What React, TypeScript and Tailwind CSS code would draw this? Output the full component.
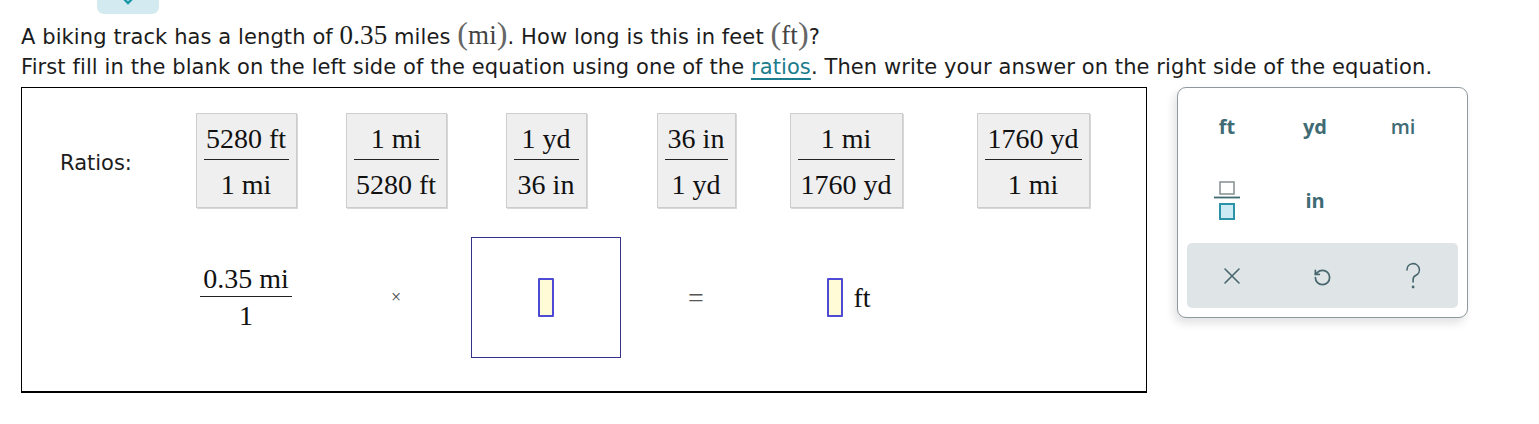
import React from 'react';

const sans = { fontFamily: '"DejaVu Sans", Verdana, sans-serif' };

type Ratio = { num: string; den: string; w: string };

const ratios: Ratio[] = [
  { num: '5280 ft', den: '1 mi', w: 'w-[101px]' },
  { num: '1 mi', den: '5280 ft', w: 'w-[101px]' },
  { num: '1 yd', den: '36 in', w: 'w-[81px]' },
  { num: '36 in', den: '1 yd', w: 'w-[79px]' },
  { num: '1 mi', den: '1760 yd', w: 'w-[113px]' },
  { num: '1760 yd', den: '1 mi', w: 'w-[113px]' },
];

const cols = 'grid grid-cols-[150px_150px_150px_150px_150px_224px]';

const RatioTile = ({ r }: { r: Ratio }) => (
  <div
    className={`${r.w} h-[95px] bg-[#efefef] border border-[#cdcdcd] shadow-[1px_1px_0_#d8d8d8] flex flex-col items-stretch pt-[10px] px-[7px] font-['Liberation_Serif',serif] text-[28px] text-[#111]`}
  >
    <div className="h-[30px] leading-[30px] text-center whitespace-nowrap">{r.num}</div>
    <div className="h-px bg-[#222] mt-[5px]" />
    <div className="h-[30px] leading-[30px] text-center whitespace-nowrap mt-[10px]">{r.den}</div>
  </div>
);

const Blank = () => (
  <div className="w-[16px] h-[39px] border-2 border-[#4f4ad4] bg-[#fffbd6] rounded-[1px]" />
);

const KeyText = ({ children }: { children: React.ReactNode }) => (
  <div className="flex items-center justify-center h-[74px] text-[20px] font-bold text-[#3f6b74]" style={{ fontFamily: '"Open Sans", sans-serif' }}>
    {children}
  </div>
);

export default function App() {
  return (
    <div className="w-[1539px] h-[424px] bg-white text-[#1c1c1c]" style={sans}>
      <div className="ml-[97px] w-[62px] h-[14px] bg-[#d3ebf0] rounded-b-[7px] flex justify-center">
        <svg width="12" height="8" viewBox="0 0 12 8" className="-mt-[2px]">
          <path d="M2 1 L6 5 L10 1" fill="none" stroke="#1a98a8" strokeWidth="2.4" strokeLinecap="round" />
        </svg>
      </div>

      <div className="pl-[21px] pt-[8px] text-[21px] tracking-[0.1px]">
        <p className="h-[30px] leading-[30px] whitespace-nowrap">
          A biking track has a length of{' '}
          <span className="font-['Liberation_Serif',serif] text-[27px] leading-[0px]">0.35</span> miles{' '}
          <span className="font-['Liberation_Serif',serif] text-[27px] leading-[0px] text-[#444]">
            <span className="text-[32px] text-[#666]">(</span>mi<span className="text-[32px] text-[#666]">)</span>
          </span>
          . How long is this in feet{' '}
          <span className="font-['Liberation_Serif',serif] text-[27px] leading-[0px] text-[#444]">
            <span className="text-[32px] text-[#666]">(</span>ft<span className="text-[32px] text-[#666]">)</span>
          </span>
          ?
        </p>
        <p className="h-[30px] leading-[30px] whitespace-nowrap">
          First fill in the blank on the left side of the equation using one of the{' '}
          <span className="text-[#1a7c8c] underline underline-offset-[4px]">ratios</span>. Then write your answer on the right side of the equation.
        </p>
      </div>

      <div className="flex items-start gap-[30px] pl-[21px] mt-[5px]">
        {/* question box */}
        <div className="w-[1126px] h-[306px] border-l border-t border-r border-b-2 border-black pt-[25px]">
          <div className="flex">
            <div className="w-[149px] pl-[38px] pt-[35px] text-[21px] leading-[30px]">Ratios:</div>
            <div className={cols}>
              {ratios.map((r, i) => (
                <div key={i} className="flex justify-center">
                  <RatioTile r={r} />
                </div>
              ))}
            </div>
          </div>

          <div className="flex mt-[29px]">
            <div className="w-[149px]" />
            <div className={`${cols} h-[121px] items-center`}>
              <div className="flex justify-center">
                <div className="flex flex-col items-center font-['Liberation_Serif',serif] text-[28px] text-[#111]">
                  <div className="leading-[30px] h-[30px] whitespace-nowrap">0.35 mi</div>
                  <div className="h-px bg-[#222] w-[92px] mt-[2px]" />
                  <div className="leading-[30px] h-[30px] mt-[4px]">1</div>
                </div>
              </div>
              <div className="flex justify-center font-['Liberation_Serif',serif] text-[18px] text-[#444]">×</div>
              <div className="flex justify-center">
                <div className="w-[151px] h-[121px] border border-[#333388] flex items-center justify-center">
                  <Blank />
                </div>
              </div>
              <div className="flex justify-center font-['Liberation_Serif',serif] text-[28px] text-[#555]">=</div>
              <div className="flex justify-center items-center gap-[10px] pl-[6px]">
                <Blank />
                <span className="font-['Liberation_Serif',serif] text-[28px] text-[#111]">ft</span>
              </div>
              <div />
            </div>
          </div>
        </div>

        {/* keypad */}
        <div className="w-[291px] h-[231px] border border-[#8e999d] rounded-[9px] bg-white shadow-[-3px_5px_10px_rgba(0,0,0,0.12)] flex flex-col">
          <div className="grid grid-cols-[88px_88px_88px] pl-[5px] pt-[2px]">
            <KeyText>ft</KeyText>
            <KeyText>yd</KeyText>
            <KeyText><span className="font-semibold">mi</span></KeyText>
            <div className="flex items-center justify-center h-[74px]">
              <svg width="28" height="42" viewBox="0 0 28 42">
                <rect x="7" y="2" width="14" height="12" fill="none" stroke="#8c9598" strokeWidth="1.6" />
                <line x1="1" y1="17.5" x2="27" y2="17.5" stroke="#3f6b74" strokeWidth="1.8" />
                <rect x="7" y="24" width="14" height="15" fill="#cbeaf3" stroke="#2a93a8" strokeWidth="2" />
              </svg>
            </div>
            <KeyText>in</KeyText>
            <div />
          </div>
          <div className="mx-[9px] mt-[5px] h-[65px] bg-[#dfe5e7] rounded-[5px] grid grid-cols-3">
            <div className="flex items-center justify-center">
              <svg width="18" height="18" viewBox="0 0 18 18">
                <path d="M2 2 L16 16 M16 2 L2 16" stroke="#48666e" strokeWidth="1.6" strokeLinecap="round" />
              </svg>
            </div>
            <div className="flex items-center justify-center pt-[4px]">
              <svg width="19" height="19" viewBox="0 0 24 24" fill="none" stroke="#48666e" strokeWidth="2.2" strokeLinecap="round" strokeLinejoin="round">
                <path d="M3 12a9 9 0 1 0 9-9 9.75 9.75 0 0 0-6.74 2.74L3 8" />
                <path d="M3 3v5h5" />
              </svg>
            </div>
            <div className="flex items-center justify-center">
              <svg width="18" height="28" viewBox="0 0 18 28">
                <path d="M3 8 a6.2 6.2 0 1 1 8.7 5.5 c-1.8 0.9 -2.6 2.1 -2.6 4 V20" fill="none" stroke="#48666e" strokeWidth="1.6" strokeLinecap="round" />
                <circle cx="9.1" cy="25" r="1.4" fill="#48666e" />
              </svg>
            </div>
          </div>
        </div>
      </div>
    </div>
  );
}
